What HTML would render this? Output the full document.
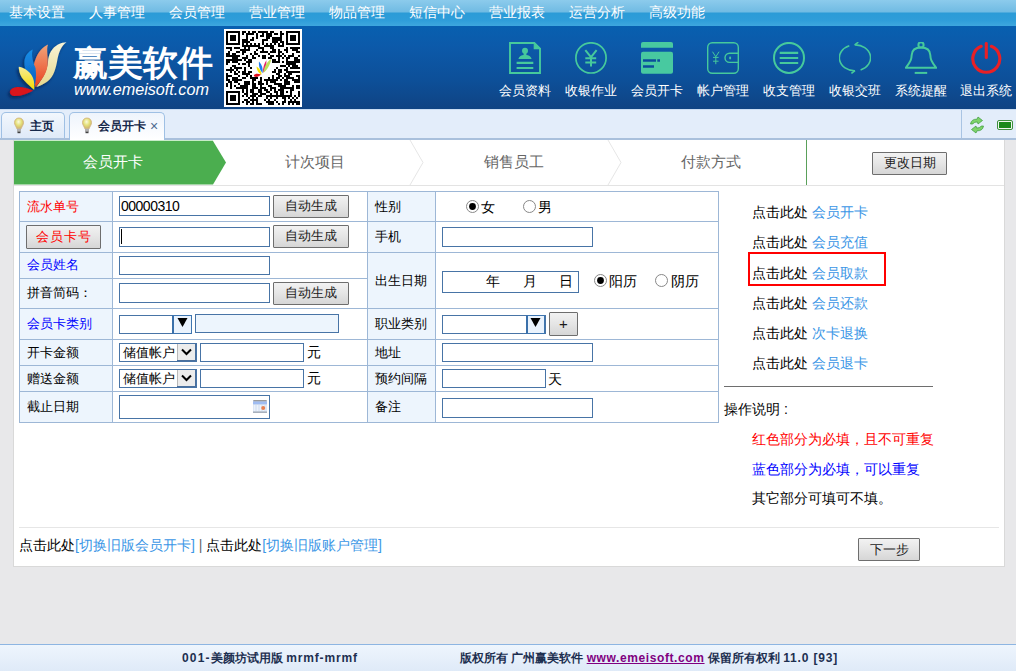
<!DOCTYPE html>
<html><head><meta charset="utf-8">
<style>
*{box-sizing:border-box}
html,body{margin:0;padding:0}
body{width:1016px;height:671px;position:relative;overflow:hidden;background:#e8e8ea;font-family:"Liberation Sans",sans-serif;color:#000}
.a{position:absolute}
.mi{position:absolute;top:3px;height:18px;line-height:18px;font-size:14px;color:#fff;white-space:nowrap}
.lbl{position:absolute;top:84px;font-size:12.5px;line-height:14px;color:#fff;white-space:nowrap;width:66px;text-align:center}
.ic{position:absolute;top:42px;width:32px;height:32px}
.vl{width:1px;background:#9db7d6}
.hl{height:1px;background:#9db7d6}
.t{position:absolute;font-size:13px;line-height:15px;white-space:nowrap;color:#000}
.in{position:absolute;border:1px solid #4874a6;background:#fff}
.btn{border:1px solid #6e6e6e;border-radius:1px;background:linear-gradient(#f2f2f2,#e5e5e5 50%,#d6d6d6);font-size:13px;line-height:20px;text-align:center;color:#1a1a1a;white-space:nowrap}
.sel{border:1px solid #8a9ab0;background:linear-gradient(#f4f4f4,#dcdcdc)}
.r{position:absolute;left:752px;font-size:14px;line-height:16px;white-space:nowrap;color:#000}
.lk{color:#3b96e6}
</style></head><body>
<!-- top menu -->
<div class="a" style="left:0;top:0;width:1016px;height:26px;background:linear-gradient(#8ccbec 0px,#70bbe3 12px,#2b9bd7 13px,#2e9dd9 20px,#3ea7de 26px)">
<span class="mi" style="left:9px">基本设置</span>
<span class="mi" style="left:89px">人事管理</span>
<span class="mi" style="left:169px">会员管理</span>
<span class="mi" style="left:249px">营业管理</span>
<span class="mi" style="left:329px">物品管理</span>
<span class="mi" style="left:409px">短信中心</span>
<span class="mi" style="left:489px">营业报表</span>
<span class="mi" style="left:569px">运营分析</span>
<span class="mi" style="left:649px">高级功能</span>
</div>
<!-- header -->
<div class="a" style="left:0;top:26px;width:1016px;height:83px;background:linear-gradient(#0860b0 0px,#0c59a9 22px,#0d4f98 55px,#0f4383 83px)">
<svg class="a" style="left:0;top:0" width="80" height="83" viewBox="0 0 80 83">
<defs>
<linearGradient id="pc" x1="0" y1="0" x2="0" y2="1"><stop offset="0" stop-color="#f8f4d6"/><stop offset="1" stop-color="#e6d88e"/></linearGradient>
<linearGradient id="po" x1="0" y1="0" x2="0" y2="1"><stop offset="0" stop-color="#f2a57a"/><stop offset="1" stop-color="#e8401e"/></linearGradient>
<linearGradient id="pb" x1="0" y1="0" x2="0" y2="1"><stop offset="0" stop-color="#1890e8"/><stop offset="1" stop-color="#0a5cc0"/></linearGradient>
<linearGradient id="py" x1="0" y1="0" x2="0" y2="1"><stop offset="0" stop-color="#f6ec9a"/><stop offset="1" stop-color="#f4dc00"/></linearGradient>
<filter id="sh" x="-30%" y="-30%" width="160%" height="160%"><feDropShadow dx="-1.5" dy="2" stdDeviation="1.8" flood-color="#001030" flood-opacity="0.6"/></filter>
</defs>
<g filter="url(#sh)">
<path d="M36.4 61C43 52 47 45 48 36C48.5 28 52 22 58 18.5C61 17 64 16.3 66.5 16.2C61 20 59 26 57.5 33C56 42 54 50 48 55C45 57.5 40 60 36.4 61Z" fill="url(#pc)"/>
<path d="M35.5 61C33 52 32 42 35.5 33.3C38 26 43 21 48 18.5C46 24 48.5 32 47.5 39.7C46.5 48 41 55 35.5 61Z" fill="url(#po)"/>
<path d="M34.6 60C29 53 24 45 24.4 36C24.8 30 28 26 32.7 23.6C31 30 33 36 35.5 42C36.5 48 36 55 34.6 60Z" fill="url(#pb)"/>
<path d="M34.1 63.8C28 58 21 53 19.5 46C19 43 18.5 41.5 18.9 40.7C25 42 31 46 33 52C34.5 56 34.5 60 34.1 63.8Z" fill="url(#py)"/>
<path d="M33.2 64.7C26 61 16 59.5 11.5 63C8.5 65.5 10 69.5 14 70C20 70.5 27 67.5 33.2 64.7Z" fill="#d8121a"/>
</g>
</svg>
<div class="a" style="left:73px;top:18px;font-size:35px;line-height:38px;font-weight:bold;color:#fff;white-space:nowrap;letter-spacing:0px">赢美软件</div>
<div class="a" style="left:74px;top:54px;font-size:16.2px;line-height:18px;font-style:italic;color:#fff;white-space:nowrap">www.emeisoft.com</div>
<div class="a" style="left:224px;top:3px;width:78px;height:78px;background:#fff"></div>
<svg class="a" style="left:226px;top:5px" width="74" height="74" viewBox="0 0 37 37" shape-rendering="crispEdges"><path d="M0 0h7v1h-7zM8 0h2v1h-2zM11 0h1v1h-1zM13 0h2v1h-2zM16 0h5v1h-5zM22 0h2v1h-2zM27 0h1v1h-1zM30 0h7v1h-7zM0 1h1v1h-1zM6 1h1v1h-1zM8 1h1v1h-1zM10 1h4v1h-4zM15 1h1v1h-1zM18 1h1v1h-1zM20 1h3v1h-3zM24 1h2v1h-2zM27 1h2v1h-2zM30 1h1v1h-1zM36 1h1v1h-1zM0 2h1v1h-1zM2 2h3v1h-3zM6 2h1v1h-1zM10 2h1v1h-1zM15 2h1v1h-1zM17 2h2v1h-2zM20 2h3v1h-3zM27 2h1v1h-1zM30 2h1v1h-1zM32 2h3v1h-3zM36 2h1v1h-1zM0 3h1v1h-1zM2 3h3v1h-3zM6 3h1v1h-1zM10 3h1v1h-1zM13 3h1v1h-1zM15 3h1v1h-1zM20 3h2v1h-2zM23 3h5v1h-5zM30 3h1v1h-1zM32 3h3v1h-3zM36 3h1v1h-1zM0 4h1v1h-1zM2 4h3v1h-3zM6 4h1v1h-1zM8 4h3v1h-3zM12 4h2v1h-2zM18 4h3v1h-3zM23 4h5v1h-5zM30 4h1v1h-1zM32 4h3v1h-3zM36 4h1v1h-1zM0 5h1v1h-1zM6 5h1v1h-1zM8 5h4v1h-4zM18 5h1v1h-1zM23 5h3v1h-3zM27 5h2v1h-2zM30 5h1v1h-1zM36 5h1v1h-1zM0 6h7v1h-7zM8 6h1v1h-1zM10 6h1v1h-1zM12 6h1v1h-1zM14 6h1v1h-1zM16 6h1v1h-1zM18 6h1v1h-1zM20 6h1v1h-1zM22 6h1v1h-1zM24 6h1v1h-1zM26 6h1v1h-1zM28 6h1v1h-1zM30 6h7v1h-7zM8 7h9v1h-9zM19 7h5v1h-5zM26 7h3v1h-3zM0 8h3v1h-3zM4 8h3v1h-3zM9 8h1v1h-1zM11 8h1v1h-1zM16 8h3v1h-3zM22 8h2v1h-2zM30 8h1v1h-1zM32 8h5v1h-5zM2 9h1v1h-1zM7 9h5v1h-5zM15 9h1v1h-1zM18 9h1v1h-1zM23 9h2v1h-2zM26 9h1v1h-1zM29 9h2v1h-2zM33 9h3v1h-3zM1 10h1v1h-1zM5 10h2v1h-2zM8 10h2v1h-2zM14 10h1v1h-1zM17 10h4v1h-4zM22 10h3v1h-3zM26 10h2v1h-2zM30 10h1v1h-1zM35 10h2v1h-2zM0 11h2v1h-2zM3 11h2v1h-2zM8 11h1v1h-1zM12 11h1v1h-1zM14 11h2v1h-2zM21 11h1v1h-1zM26 11h1v1h-1zM28 11h1v1h-1zM33 11h1v1h-1zM0 12h7v1h-7zM10 12h1v1h-1zM13 12h1v1h-1zM16 12h1v1h-1zM18 12h2v1h-2zM22 12h2v1h-2zM25 12h3v1h-3zM29 12h1v1h-1zM31 12h3v1h-3zM36 12h1v1h-1zM3 13h3v1h-3zM8 13h3v1h-3zM13 13h2v1h-2zM18 13h2v1h-2zM21 13h2v1h-2zM26 13h1v1h-1zM28 13h1v1h-1zM30 13h2v1h-2zM34 13h2v1h-2zM0 14h8v1h-8zM9 14h1v1h-1zM11 14h2v1h-2zM23 14h2v1h-2zM26 14h1v1h-1zM30 14h1v1h-1zM34 14h3v1h-3zM0 15h2v1h-2zM3 15h3v1h-3zM10 15h3v1h-3zM23 15h4v1h-4zM28 15h1v1h-1zM30 15h7v1h-7zM0 16h1v1h-1zM6 16h1v1h-1zM8 16h2v1h-2zM11 16h1v1h-1zM30 16h5v1h-5zM3 17h2v1h-2zM11 17h1v1h-1zM27 17h3v1h-3zM31 17h1v1h-1zM33 17h3v1h-3zM2 18h1v1h-1zM4 18h4v1h-4zM9 18h1v1h-1zM12 18h1v1h-1zM25 18h1v1h-1zM30 18h1v1h-1zM32 18h5v1h-5zM0 19h4v1h-4zM5 19h1v1h-1zM9 19h1v1h-1zM24 19h1v1h-1zM26 19h2v1h-2zM29 19h2v1h-2zM2 20h1v1h-1zM4 20h1v1h-1zM6 20h1v1h-1zM8 20h2v1h-2zM11 20h2v1h-2zM23 20h2v1h-2zM26 20h2v1h-2zM30 20h7v1h-7zM0 21h1v1h-1zM4 21h2v1h-2zM8 21h4v1h-4zM25 21h2v1h-2zM29 21h1v1h-1zM31 21h2v1h-2zM0 22h3v1h-3zM6 22h1v1h-1zM10 22h1v1h-1zM12 22h1v1h-1zM23 22h1v1h-1zM26 22h2v1h-2zM29 22h3v1h-3zM35 22h2v1h-2zM0 23h1v1h-1zM3 23h3v1h-3zM8 23h2v1h-2zM12 23h4v1h-4zM17 23h1v1h-1zM21 23h1v1h-1zM23 23h1v1h-1zM25 23h2v1h-2zM28 23h1v1h-1zM30 23h4v1h-4zM36 23h1v1h-1zM0 24h2v1h-2zM3 24h5v1h-5zM13 24h2v1h-2zM17 24h1v1h-1zM19 24h7v1h-7zM27 24h1v1h-1zM29 24h2v1h-2zM33 24h4v1h-4zM1 25h2v1h-2zM4 25h2v1h-2zM9 25h3v1h-3zM13 25h1v1h-1zM16 25h2v1h-2zM20 25h1v1h-1zM22 25h3v1h-3zM29 25h3v1h-3zM34 25h3v1h-3zM0 26h1v1h-1zM2 26h1v1h-1zM6 26h1v1h-1zM9 26h3v1h-3zM13 26h2v1h-2zM16 26h3v1h-3zM20 26h1v1h-1zM24 26h4v1h-4zM29 26h3v1h-3zM0 27h1v1h-1zM2 27h1v1h-1zM4 27h1v1h-1zM7 27h4v1h-4zM13 27h2v1h-2zM17 27h1v1h-1zM21 27h2v1h-2zM26 27h4v1h-4zM33 27h1v1h-1zM35 27h2v1h-2zM2 28h1v1h-1zM5 28h6v1h-6zM13 28h3v1h-3zM17 28h3v1h-3zM22 28h3v1h-3zM27 28h7v1h-7zM35 28h2v1h-2zM8 29h1v1h-1zM10 29h1v1h-1zM12 29h2v1h-2zM16 29h2v1h-2zM19 29h2v1h-2zM22 29h1v1h-1zM24 29h1v1h-1zM26 29h3v1h-3zM32 29h2v1h-2zM0 30h7v1h-7zM8 30h1v1h-1zM10 30h1v1h-1zM12 30h2v1h-2zM16 30h2v1h-2zM20 30h2v1h-2zM24 30h2v1h-2zM27 30h2v1h-2zM30 30h1v1h-1zM32 30h1v1h-1zM36 30h1v1h-1zM0 31h1v1h-1zM6 31h1v1h-1zM9 31h2v1h-2zM13 31h3v1h-3zM17 31h3v1h-3zM22 31h1v1h-1zM25 31h1v1h-1zM27 31h2v1h-2zM32 31h1v1h-1zM36 31h1v1h-1zM0 32h1v1h-1zM2 32h3v1h-3zM6 32h1v1h-1zM8 32h1v1h-1zM10 32h1v1h-1zM12 32h3v1h-3zM16 32h2v1h-2zM20 32h13v1h-13zM34 32h1v1h-1zM36 32h1v1h-1zM0 33h1v1h-1zM2 33h3v1h-3zM6 33h1v1h-1zM11 33h1v1h-1zM13 33h1v1h-1zM15 33h1v1h-1zM20 33h1v1h-1zM22 33h1v1h-1zM25 33h1v1h-1zM28 33h2v1h-2zM31 33h1v1h-1zM33 33h1v1h-1zM35 33h1v1h-1zM0 34h1v1h-1zM2 34h3v1h-3zM6 34h1v1h-1zM9 34h2v1h-2zM12 34h4v1h-4zM19 34h1v1h-1zM21 34h1v1h-1zM24 34h1v1h-1zM29 34h1v1h-1zM32 34h1v1h-1zM34 34h1v1h-1zM0 35h1v1h-1zM6 35h1v1h-1zM8 35h1v1h-1zM10 35h2v1h-2zM13 35h1v1h-1zM15 35h1v1h-1zM20 35h4v1h-4zM25 35h1v1h-1zM28 35h2v1h-2zM31 35h6v1h-6zM0 36h7v1h-7zM10 36h1v1h-1zM12 36h2v1h-2zM15 36h3v1h-3zM21 36h3v1h-3zM26 36h1v1h-1zM28 36h1v1h-1zM31 36h1v1h-1zM33 36h1v1h-1zM35 36h2v1h-2z" fill="#000"/></svg>
<svg class="a" style="left:252px;top:32px" width="20" height="20" viewBox="0 0 20 20">
<path d="M1.8 17.8C2.5 15.2 6 15.2 9 16.6C6.8 19 3.2 20 1.8 17.8Z" fill="#e0101c"/>
<path d="M4.6 8.6C7.2 10.5 9.6 13.5 9.6 16.8C6.6 15.5 4.6 12 4.6 8.6Z" fill="#f8e400"/>
<path d="M7 3.6C10 6.5 11.2 11 10.6 15.2C8 12.5 6.4 8 7 3.6Z" fill="#1e7ef0"/>
<path d="M14.4 2.2C12.2 5 10.8 10 10.9 15C13.6 11.8 14.8 7 14.4 2.2Z" fill="#e8206a"/>
<path d="M19.2 1C14.8 3.5 12 9 11.4 14.8C15.2 12 18.3 7 19.2 1Z" fill="#bce05a"/>
</svg>
</div>
<!-- header icons -->
<svg class="ic" style="left:509px" viewBox="0 0 32 32" fill="none" stroke="#46c99c" stroke-width="1.9">
<path d="M1 1H25.3L31 6.7V31H1Z"/>
<path d="M25.3 1V6.7H31Z" fill="#46c99c" stroke-width="1.2"/>
<circle cx="16" cy="8.8" r="3" fill="#46c99c" stroke="none"/>
<path d="M9.4 17C10 14.2 12.5 13.3 14.6 13H17.4C19.5 13.3 22 14.2 22.6 17Z" fill="#46c99c" stroke="none"/>
<rect x="14.6" y="10.5" width="2.8" height="3.5" fill="#46c99c" stroke="none"/>
<path d="M7.6 20.9H24.3M7.6 26H24.3" stroke-width="2.1"/>
</svg>
<svg class="ic" style="left:575px" viewBox="0 0 32 32" fill="none" stroke="#46c99c" stroke-width="1.7">
<circle cx="16" cy="15.9" r="15.1"/>
<path d="M10.3 8.2L16 15.1L21.6 8.2M16 15.1V24.6M10.3 16.3H21.2M10.3 20.4H21.2" stroke-width="2"/>
</svg>
<svg class="ic" style="left:641px" viewBox="0 0 32 32">
<path d="M2 0H30A2 2 0 0 1 32 2V5.8H0V2A2 2 0 0 1 2 0Z" fill="#48c9a0"/>
<rect x="0" y="9.8" width="32" height="22" rx="2" fill="#48c9a0"/>
<path d="M2 18.5H15M16.3 18.5H19M2 24.6H13" stroke="#0b4d9c" stroke-width="2.5"/>
</svg>
<svg class="ic" style="left:707px" viewBox="0 0 32 32" fill="none" stroke="#46c99c" stroke-width="1.4">
<rect x="0.7" y="0.7" width="30.6" height="30.6" rx="4.5"/>
<path d="M31.3 11.2H22.6A4.6 4.6 0 0 0 22.6 20.4H31.3"/>
<ellipse cx="23.1" cy="16" rx="1" ry="1.4" fill="#46c99c" stroke="none"/>
<path d="M5.5 9.7L8.8 14.8L12.1 9.7M8.8 14.8V22.2M6 15.4H11.6M6 19.2H11.6" stroke-width="1"/>
</svg>
<svg class="ic" style="left:773px" viewBox="0 0 32 32" fill="none" stroke="#46c99c" stroke-width="2">
<circle cx="16" cy="15.9" r="15"/>
<path d="M6.7 10.9H25.2M6.7 16H25.2M6.7 21H25.2" stroke-width="2.2"/>
</svg>
<svg class="ic" style="left:839px" viewBox="0 0 32 32" fill="none" stroke="#46c99c" stroke-width="1.6">
<path d="M15.7 2.9A15.2 12.9 0 0 1 21.6 27.9"/>
<path d="M10.3 3.7A15.2 12.9 0 0 0 16 28.7"/>
<path d="M15.7 2.9L19.3 0.2M16 28.7L12.4 31.4"/>
</svg>
<svg class="ic" style="left:905px" viewBox="0 0 32 32" fill="none" stroke="#46c99c" stroke-width="2">
<circle cx="16" cy="2.9" r="2.6"/>
<path d="M16 5.5C12 5.5 7 7 6.7 13C6.5 17 6 19 0.8 25.8H31.2C26 19 25.5 17 25.3 13C25 7 20 5.5 16 5.5Z" stroke-linejoin="round"/>
<path d="M9.7 30.9H22.2" stroke-width="2"/>
</svg>
<svg class="ic" style="left:970px" viewBox="0 0 32 32" fill="none" stroke="#e92025" stroke-width="3.1" stroke-linecap="round">
<path d="M11.2 4.3A13.5 13.5 0 1 0 21.4 4.3"/>
<path d="M16.3 1.5V15.4"/>
</svg>
<div class="lbl" style="left:492px">会员资料</div>
<div class="lbl" style="left:558px">收银作业</div>
<div class="lbl" style="left:624px">会员开卡</div>
<div class="lbl" style="left:690px">帐户管理</div>
<div class="lbl" style="left:756px">收支管理</div>
<div class="lbl" style="left:822px">收银交班</div>
<div class="lbl" style="left:888px">系统提醒</div>
<div class="lbl" style="left:953px">退出系统</div>
<!-- tab bar -->
<div class="a" style="left:0;top:109px;width:1016px;height:31px;background:#e3edfa;border-top:1px solid #c9ddf3;border-bottom:2px solid #a9c0dc"></div>
<div class="a" style="left:961px;top:110px;width:1px;height:28px;background:#a9c4e3"></div>
<div class="a" style="left:1px;top:112px;width:64px;height:26px;border:1px solid #9fc0e4;border-bottom:none;border-radius:5px 5px 0 0;background:linear-gradient(#f2f7fd,#dfeaf8)"></div>
<div class="a" style="left:69px;top:112px;width:96px;height:28px;border:1px solid #9fc0e4;border-bottom:none;border-radius:5px 5px 0 0;background:linear-gradient(#eef4fc,#ffffff)"></div>
<svg class="a" style="left:13px;top:117px" width="12" height="17" viewBox="0 0 12 17">
<defs><radialGradient id="bulb" cx="0.45" cy="0.35" r="0.6"><stop offset="0" stop-color="#fafadc"/><stop offset="0.55" stop-color="#e4e07a"/><stop offset="1" stop-color="#d0b870"/></radialGradient></defs>
<path d="M6 1C3.3 1 1.5 3 1.5 5.6C1.5 8 3.2 9.4 3.9 11.8H8.1C8.8 9.4 10.5 8 10.5 5.6C10.5 3 8.7 1 6 1Z" fill="url(#bulb)" stroke="#d0b078" stroke-width="0.8"/>
<rect x="4" y="11.8" width="4" height="3" fill="#b0b0b0"/><rect x="4.5" y="14.6" width="3" height="1.6" fill="#404040"/>
</svg>
<div class="a" style="left:30px;top:119px;font-size:12px;line-height:14px;font-weight:bold;color:#15284a">主页</div>
<svg class="a" style="left:81px;top:117px" width="12" height="17" viewBox="0 0 12 17">
<path d="M6 1C3.3 1 1.5 3 1.5 5.6C1.5 8 3.2 9.4 3.9 11.8H8.1C8.8 9.4 10.5 8 10.5 5.6C10.5 3 8.7 1 6 1Z" fill="url(#bulb)" stroke="#d0b078" stroke-width="0.8"/>
<rect x="4" y="11.8" width="4" height="3" fill="#b0b0b0"/><rect x="4.5" y="14.6" width="3" height="1.6" fill="#404040"/>
</svg>
<div class="a" style="left:98px;top:119px;font-size:12px;line-height:14px;font-weight:bold;color:#15284a">会员开卡</div>
<div class="a" style="left:150px;top:119px;font-size:14px;line-height:14px;color:#4f6a90">×</div>
<!-- refresh icon & min icon -->
<svg class="a" style="left:968px;top:116px" width="18" height="18" viewBox="0 0 18 18">
<path d="M2.5 8C3 4.5 5.5 3 9 3.2L10 1L14.5 4.5L10 8L9.5 6C7 6 5.5 6.8 4.8 8Z" fill="#7ed36a" stroke="#3a9a3a" stroke-width="0.7"/>
<path d="M15.5 10C15 13.5 12.5 15 9 14.8L8 17L3.5 13.5L8 10L8.5 12C11 12 12.5 11.2 13.2 10Z" fill="#7ed36a" stroke="#3a9a3a" stroke-width="0.7"/>
</svg>
<div class="a" style="left:997px;top:120px;width:16px;height:10px;border:1px solid #3f8f3f;border-radius:2px;background:#f0f8ee"></div>
<div class="a" style="left:999px;top:122px;width:12px;height:6px;background:#1a8a1a"></div>
<!-- panel -->
<div class="a" style="left:13px;top:140px;width:992px;height:427px;background:#fff;border:1px solid #d9d9d9;border-top:none"></div>
<!-- step bar -->
<svg class="a" style="left:14px;top:140px" width="990" height="46" viewBox="0 0 990 46">
<path d="M0 1H199L212 22.5L199 44.5H0Z" fill="#4bae4f"/>
<path d="M0 0.5H199" stroke="#c8ecc8" stroke-width="1"/>
<path d="M396 0L409 22.5L396 45M594 0L607 22.5L594 45" fill="none" stroke="#e6e6e6" stroke-width="1"/>
<path d="M792.5 0V45" stroke="#5aa05a" stroke-width="1"/>
<path d="M0 45.5H990" stroke="#e3e3e3" stroke-width="1"/>
</svg>
<div class="a" style="left:14px;top:153px;width:198px;text-align:center;font-size:15px;line-height:17px;color:#fff">会员开卡</div>
<div class="a" style="left:216px;top:153px;width:198px;text-align:center;font-size:15px;line-height:17px;color:#666">计次项目</div>
<div class="a" style="left:415px;top:153px;width:198px;text-align:center;font-size:15px;line-height:17px;color:#666">销售员工</div>
<div class="a" style="left:612px;top:153px;width:198px;text-align:center;font-size:15px;line-height:17px;color:#666">付款方式</div>
<div class="a btn" style="left:872px;top:152px;width:75px;height:23px;">更改日期</div>
<!-- form table -->
<div class="a" style="left:19px;top:191px;width:700px;height:232px;border:1px solid #9db7d6;background:#fff"></div>
<div class="a" style="left:20px;top:192px;width:92px;height:230px;background:#edf5fd"></div>
<div class="a" style="left:368px;top:192px;width:67px;height:230px;background:#edf5fd"></div>
<div class="a vl" style="left:112px;top:191px;height:231px"></div>
<div class="a vl" style="left:367px;top:191px;height:231px"></div>
<div class="a vl" style="left:435px;top:191px;height:231px"></div>
<div class="a hl" style="left:19px;top:221px;width:700px"></div>
<div class="a hl" style="left:19px;top:252px;width:700px"></div>
<div class="a hl" style="left:19px;top:278px;width:349px"></div>
<div class="a hl" style="left:19px;top:308px;width:700px"></div>
<div class="a hl" style="left:19px;top:339px;width:700px"></div>
<div class="a hl" style="left:19px;top:365px;width:700px"></div>
<div class="a hl" style="left:19px;top:391px;width:700px"></div>
<!-- labels -->
<div class="t" style="left:27px;top:199px;color:#f00">流水单号</div>
<div class="a btn" style="left:26px;top:225px;width:75px;height:24px;color:#f00;line-height:22px;letter-spacing:1px;padding-left:1px">会员卡号</div>
<div class="t" style="left:27px;top:257px;color:#00f">会员姓名</div>
<div class="t" style="left:27px;top:285px;color:#000">拼音简码：</div>
<div class="t" style="left:27px;top:316px;color:#00f">会员卡类别</div>
<div class="t" style="left:27px;top:345px">开卡金额</div>
<div class="t" style="left:27px;top:371px">赠送金额</div>
<div class="t" style="left:27px;top:399px">截止日期</div>
<div class="t" style="left:375px;top:199px">性别</div>
<div class="t" style="left:375px;top:229px">手机</div>
<div class="t" style="left:375px;top:273px">出生日期</div>
<div class="t" style="left:375px;top:316px">职业类别</div>
<div class="t" style="left:375px;top:345px">地址</div>
<div class="t" style="left:375px;top:371px">预约间隔</div>
<div class="t" style="left:375px;top:399px">备注</div>
<!-- left values -->
<div class="in" style="left:119px;top:196px;width:151px;height:20px"></div>
<div class="t" style="left:121px;top:199px;font-size:14px;letter-spacing:-0.5px">00000310</div>
<div class="a btn" style="left:273px;top:195px;width:76px;height:23px">自动生成</div>
<div class="in" style="left:119px;top:227px;width:151px;height:20px"></div>
<div class="a" style="left:121px;top:229px;width:1px;height:15px;background:#000"></div>
<div class="a btn" style="left:273px;top:225px;width:76px;height:23px">自动生成</div>
<div class="in" style="left:119px;top:256px;width:151px;height:19px"></div>
<div class="in" style="left:119px;top:283px;width:151px;height:20px"></div>
<div class="a btn" style="left:273px;top:282px;width:76px;height:23px">自动生成</div>
<div class="in" style="left:119px;top:315px;width:73px;height:19px"></div>
<div class="a" style="left:172px;top:315px;width:20px;height:19px;border:1px solid #3f76b0;border-left:2px solid #3a70aa;background:#eaf3fd"></div>
<svg class="a" style="left:176px;top:317px" width="13" height="11" viewBox="0 0 13 11"><path d="M1.5 1H11.5L6.5 10Z" fill="#000"/></svg>
<div class="in" style="left:195px;top:314px;width:144px;height:19px;background:#edf5fd"></div>
<div class="in" style="left:119px;top:343px;width:78px;height:19px"></div>
<div class="t" style="left:123px;top:345px;font-size:13px">储值帐户</div>
<svg class="a" style="left:177px;top:344px" width="19" height="17" viewBox="0 0 19 17"><rect x="0" y="0" width="19" height="17" fill="#ececec"/><path d="M0.5 0V17" stroke="#b8b8b8"/><path d="M18.5 0V17M0 16.5H19" stroke="#4a6f9c" stroke-width="1"/><path d="M5 5.5L9.5 10L14 5.5" fill="none" stroke="#000" stroke-width="2"/></svg>
<div class="in" style="left:200px;top:343px;width:104px;height:19px"></div>
<div class="t" style="left:307px;top:345px;font-size:14px">元</div>
<div class="in" style="left:119px;top:369px;width:78px;height:19px"></div>
<div class="t" style="left:123px;top:371px;font-size:13px">储值帐户</div>
<svg class="a" style="left:177px;top:370px" width="19" height="17" viewBox="0 0 19 17"><rect x="0" y="0" width="19" height="17" fill="#ececec"/><path d="M0.5 0V17" stroke="#b8b8b8"/><path d="M18.5 0V17M0 16.5H19" stroke="#4a6f9c" stroke-width="1"/><path d="M5 5.5L9.5 10L14 5.5" fill="none" stroke="#000" stroke-width="2"/></svg>
<div class="in" style="left:200px;top:369px;width:104px;height:19px"></div>
<div class="t" style="left:307px;top:371px;font-size:14px">元</div>
<div class="in" style="left:119px;top:395px;width:151px;height:24px"></div>
<svg class="a" style="left:253px;top:400px" width="14" height="13" viewBox="0 0 14 13">
<rect x="0" y="0" width="14" height="13" fill="#c8d4e4"/>
<rect x="0.5" y="0" width="13" height="1.5" fill="#9a9a9a"/>
<rect x="0" y="1.5" width="14" height="3" fill="#9fbcf2"/>
<rect x="0" y="4.5" width="14" height="7" fill="#dde7f6"/>
<path d="M1.5 5.5V11.5M4.5 5.5V11.5M7.5 5.5V11.5M10.5 5.5V11.5" stroke="#ffffff" stroke-width="0.9" stroke-dasharray="1 1"/>
<circle cx="10.2" cy="8" r="2" fill="#e88050"/>
<rect x="0" y="11.5" width="14" height="1.5" fill="#a8b0bc"/>
</svg>
<!-- right values -->
<svg class="a" style="left:465px;top:199px" width="15" height="15" viewBox="0 0 15 15"><circle cx="7.5" cy="7.5" r="6" fill="#fff" stroke="#888" stroke-width="1"/><circle cx="7.5" cy="7.5" r="3.4" fill="#000"/></svg>
<div class="t" style="left:481px;top:200px;font-size:14px">女</div>
<svg class="a" style="left:522px;top:199px" width="15" height="15" viewBox="0 0 15 15"><circle cx="7.5" cy="7.5" r="6" fill="#fff" stroke="#888" stroke-width="1"/></svg>
<div class="t" style="left:538px;top:200px;font-size:14px">男</div>
<div class="in" style="left:442px;top:227px;width:151px;height:20px"></div>
<div class="in" style="left:442px;top:271px;width:137px;height:22px"></div>
<div class="t" style="left:486px;top:274px;font-size:14px">年</div>
<div class="t" style="left:523px;top:274px;font-size:14px">月</div>
<div class="t" style="left:559px;top:274px;font-size:14px">日</div>
<svg class="a" style="left:593px;top:273px" width="15" height="15" viewBox="0 0 15 15"><circle cx="7.5" cy="7.5" r="6" fill="#fff" stroke="#888" stroke-width="1"/><circle cx="7.5" cy="7.5" r="3.4" fill="#000"/></svg>
<div class="t" style="left:609px;top:274px;font-size:14px">阳历</div>
<svg class="a" style="left:654px;top:273px" width="15" height="15" viewBox="0 0 15 15"><circle cx="7.5" cy="7.5" r="6" fill="#fff" stroke="#888" stroke-width="1"/></svg>
<div class="t" style="left:671px;top:274px;font-size:14px">阴历</div>
<div class="in" style="left:442px;top:315px;width:104px;height:19px"></div>
<div class="a" style="left:526px;top:315px;width:19px;height:19px;border:1px solid #3f76b0;border-left:2px solid #3a70aa;background:#eaf3fd"></div>
<svg class="a" style="left:529px;top:317px" width="13" height="11" viewBox="0 0 13 11"><path d="M1.5 1H11.5L6.5 10Z" fill="#000"/></svg>
<div class="a btn" style="left:549px;top:312px;width:29px;height:24px;font-size:15px;line-height:21px">+</div>
<div class="in" style="left:442px;top:343px;width:151px;height:19px"></div>
<div class="in" style="left:442px;top:369px;width:104px;height:19px"></div>
<div class="t" style="left:548px;top:372px;font-size:14px">天</div>
<div class="in" style="left:442px;top:398px;width:151px;height:20px"></div>
<!-- right side -->
<div class="r" style="top:204px">点击此处 <span class="lk">会员开卡</span></div>
<div class="r" style="top:234px">点击此处 <span class="lk">会员充值</span></div>
<div class="r" style="top:265px">点击此处 <span class="lk">会员取款</span></div>
<div class="r" style="top:295px">点击此处 <span class="lk">会员还款</span></div>
<div class="r" style="top:325px">点击此处 <span class="lk">次卡退换</span></div>
<div class="r" style="top:355px">点击此处 <span class="lk">会员退卡</span></div>
<div class="a" style="left:748px;top:252px;width:138px;height:34px;border:2px solid #f00"></div>
<div class="a" style="left:724px;top:386px;width:209px;height:1px;background:#6e6e6e"></div>
<div class="r" style="left:724px;top:401px">操作说明<span style="margin-left:4px">:</span></div>
<div class="r" style="top:431px;color:#f00">红色部分为必填，且不可重复</div>
<div class="r" style="top:461px;color:#00f">蓝色部分为必填，可以重复</div>
<div class="r" style="top:490px">其它部分可填可不填。</div>
<!-- bottom -->
<div class="a" style="left:19px;top:527px;width:980px;height:1px;background:#e6e6e6"></div>
<div class="r" style="left:19px;top:537px;">点击此处<span class="lk">[切换旧版会员开卡]</span> <span style="color:#666">|</span> 点击此处<span class="lk">[切换旧版账户管理]</span></div>
<div class="a btn" style="left:858px;top:538px;width:62px;height:23px;line-height:22px">下一步</div>
<!-- footer -->
<div class="a" style="left:0;top:644px;width:1016px;height:27px;border-top:1px solid #8db5e2;background:linear-gradient(#eef5fd,#dfeaf8)"></div>
<div class="a" style="left:182px;top:651px;font-size:12px;line-height:15px;font-weight:bold;color:#1d2f50;white-space:nowrap"><span style="letter-spacing:1.2px">001-</span>美颜坊试用版 <span style="letter-spacing:0.85px">mrmf-mrmf</span></div>
<div class="a" style="left:460px;top:651px;font-size:12px;line-height:15px;font-weight:bold;color:#1d2f50;white-space:nowrap">版权所有 广州赢美软件 <span style="color:#800080;text-decoration:underline;letter-spacing:0.6px">www.emeisoft.com</span> 保留所有权利 <span style="letter-spacing:0.85px">11.0 [93]</span></div>
</body></html>
